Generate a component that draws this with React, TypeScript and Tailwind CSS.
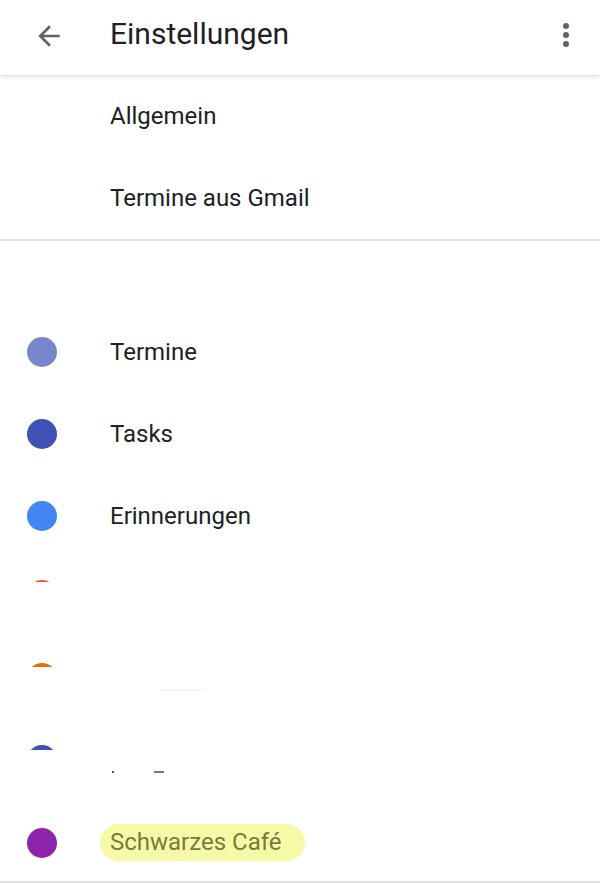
import React from 'react';

const font = { fontFamily: 'Roboto, "Noto Sans", sans-serif' };

function Dot({ color }: { color: string }) {
  return <div className={`w-[30px] h-[30px] rounded-full ${color}`} />;
}

function HiddenDot({ color, h }: { color: string; h: string }) {
  // only the top edge of the dot shows, the rest is covered
  return (
    <div className="w-[30px] h-[30px]">
      <div className={`w-[30px] ${h} overflow-hidden`}>
        <div className={`w-[30px] h-[30px] rounded-full ${color}`} />
      </div>
    </div>
  );
}

function CalendarRow({ dot, children }: { dot: React.ReactNode; children?: React.ReactNode }) {
  return (
    <div className="h-[82px] flex items-center pl-[27px]">
      <div className="w-[83px] flex">{dot}</div>
      <div className="text-[24px] text-[#202124]">{children}</div>
    </div>
  );
}

export default function App() {
  return (
    <div className="w-[600px] h-[883px] bg-white overflow-hidden" style={font}>
      <header className="h-[75px] flex items-center relative shadow-[0_2px_4px_rgba(0,0,0,0.12)] z-10">
        <div className="w-[110px] pl-[33px] flex pb-[4px]">
          <svg width="32" height="32" viewBox="0 0 24 24" fill="#5f6368">
            <path d="M20 11H7.83l5.59-5.59L12 4l-8 8 8 8 1.41-1.41L7.83 13H20v-2z" />
          </svg>
        </div>
        <div className="flex-1 text-[30px] text-[#202124] pb-[8px]">Einstellungen</div>
        <div className="pr-[22px] flex pb-[6px]">
          <svg width="24" height="28" viewBox="0 0 24 28" fill="#5f6368">
            <circle cx="12" cy="5" r="3" />
            <circle cx="12" cy="14" r="3" />
            <circle cx="12" cy="23" r="3" />
          </svg>
        </div>
      </header>

      <div className="border-b-[2px] border-[#e0e0e0]">
        <div className="h-[82px] flex items-center pl-[110px] text-[24px] text-[#202124]">Allgemein</div>
        <div className="h-[82px] flex items-center pl-[110px] text-[24px] text-[#202124]">Termine aus Gmail</div>
      </div>

      <div className="h-[70px]" />

      <CalendarRow dot={<Dot color="bg-[#7986cb]" />}>Termine</CalendarRow>
      <CalendarRow dot={<Dot color="bg-[#3f51b5]" />}>Tasks</CalendarRow>
      <CalendarRow dot={<Dot color="bg-[#4285f4]" />}>Erinnerungen</CalendarRow>
      <CalendarRow dot={<div className="-mt-[6px]"><HiddenDot color="bg-[#f4511e]" h="h-[2px]" /></div>} />
      <CalendarRow dot={<div className="-mt-[5px]"><HiddenDot color="bg-[#ef6c00]" h="h-[4px]" /></div>}>
        <div className="pt-[20px] pl-[50px]">
          <div className="w-[45px] h-[2px] bg-[#f4f4f4]" />
        </div>
      </CalendarRow>
      <CalendarRow dot={<div className="-mt-[4px]"><HiddenDot color="bg-[#3f51b5]" h="h-[5px]" /></div>}>
        <div className="flex items-end gap-[40px] pt-[20px] pl-[2px]">
          <span className="w-[2px] h-[2px] bg-[#555]" />
          <span className="w-[10px] h-[2px] bg-[#777]" />
        </div>
      </CalendarRow>
      <div className="h-[80px] flex items-center pl-[27px] border-b-[2px] border-[#e0e0e0]">
        <div className="w-[83px] flex pt-[2px]">
          <Dot color="bg-[#8e24aa]" />
        </div>
        <span className="-ml-[10px] pl-[10px] pr-[23px] h-[37px] flex items-center rounded-full bg-[#f6f9a6] text-[24px] text-[#777c3c]">
          Schwarzes Café
        </span>
      </div>
    </div>
  );
}
